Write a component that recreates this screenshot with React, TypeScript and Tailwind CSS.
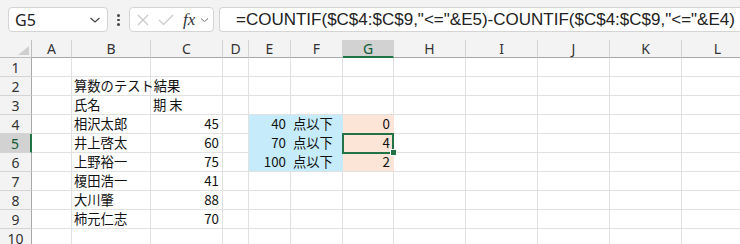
import React from 'react';

const COLS = ['A', 'B', 'C', 'D', 'E', 'F', 'G', 'H', 'I', 'J', 'K', 'L'];

type Cell = { text?: string; align?: 'left' | 'right'; fill?: 'blue' | 'peach' };

// row number -> column letter -> cell
const sheet: Record<number, Record<string, Cell>> = {
  2: { B: { text: '算数のテスト結果' } },
  3: { B: { text: '氏名' }, C: { text: '期 末' } },
  4: {
    B: { text: '相沢太郎' },
    C: { text: '45', align: 'right' },
    E: { text: '40', align: 'right', fill: 'blue' },
    F: { text: '点以下', fill: 'blue' },
    G: { text: '0', align: 'right', fill: 'peach' },
  },
  5: {
    B: { text: '井上啓太' },
    C: { text: '60', align: 'right' },
    E: { text: '70', align: 'right', fill: 'blue' },
    F: { text: '点以下', fill: 'blue' },
    G: { text: '4', align: 'right', fill: 'peach' },
  },
  6: {
    B: { text: '上野裕一' },
    C: { text: '75', align: 'right' },
    E: { text: '100', align: 'right', fill: 'blue' },
    F: { text: '点以下', fill: 'blue' },
    G: { text: '2', align: 'right', fill: 'peach' },
  },
  7: { B: { text: '榎田浩一' }, C: { text: '41', align: 'right' } },
  8: { B: { text: '大川肇' }, C: { text: '88', align: 'right' } },
  9: { B: { text: '柿元仁志' }, C: { text: '70', align: 'right' } },
};

const cellFont = { fontFamily: '"Noto Sans CJK JP", "Noto Sans", sans-serif' };
const uiFont = { fontFamily: '"Noto Sans", "Liberation Sans", sans-serif' };

const FormulaBar: React.FC = () => (
  <div className="flex h-[40px] items-start bg-[#f3f3f3] pt-[7px]" style={uiFont}>
    <div className="ml-[8px] flex h-[25px] w-[100px] items-center justify-between rounded-[4px] border border-[#d4d4d4] bg-white pl-[6px] pr-[6px]">
      <span className="text-[16px] leading-none text-[#222]">G5</span>
      <svg width="12" height="8" viewBox="0 0 12 8">
        <path d="M1.5 2 L6 6 L10.5 2" fill="none" stroke="#444" strokeWidth="1.2" />
      </svg>
    </div>
    <div className="flex w-[21px] flex-col items-center gap-[2px] pt-[7px]">
      <span className="h-[2.5px] w-[2.5px] rounded-full bg-[#444]" />
      <span className="h-[2.5px] w-[2.5px] rounded-full bg-[#444]" />
      <span className="h-[2.5px] w-[2.5px] rounded-full bg-[#444]" />
    </div>
    <div className="flex h-[25px] w-[85px] items-center rounded-[4px] border border-[#d4d4d4] bg-white pl-[7px]">
      <svg width="12" height="12" viewBox="0 0 12 12">
        <path d="M1 1 L11 11 M11 1 L1 11" stroke="#c8c8c8" strokeWidth="1.2" />
      </svg>
      <svg width="16" height="12" viewBox="0 0 16 12" className="ml-[9px]">
        <path d="M1 6 L5.5 10.5 L15 1" fill="none" stroke="#c8c8c8" strokeWidth="1.2" />
      </svg>
      <span
        className="ml-[9px] text-[17px] italic leading-none text-[#333]"
        style={{ fontFamily: '"Liberation Serif", serif' }}
      >
        fx
      </span>
      <svg width="9" height="6" viewBox="0 0 9 6" className="ml-[5px]">
        <path d="M1 1.5 L4.5 4.5 L8 1.5" fill="none" stroke="#777" strokeWidth="1" />
      </svg>
    </div>
    <div className="ml-[5px] flex h-[25px] flex-1 items-center rounded-l-[4px] border border-r-0 border-[#d4d4d4] bg-white pl-[16px]">
      <span className="whitespace-nowrap text-[17px] leading-none text-[#222]" style={{ fontFamily: '"Liberation Sans", sans-serif' }}>
        =COUNTIF($C$4:$C$9,"&lt;="&amp;E5)-COUNTIF($C$4:$C$9,"&lt;="&amp;E4)
      </span>
    </div>
  </div>
);

const App: React.FC = () => {
  const rows = [1, 2, 3, 4, 5, 6, 7, 8, 9, 10];
  return (
    <div className="h-[244px] w-[740px] overflow-hidden bg-white">
      <FormulaBar />
      <div
        className="grid w-[754px] grid-cols-[32px_40px_79px_72px_26px_42px_52px_51px_72px_72px_72px_72px_72px] grid-rows-[18px_repeat(10,19px)]"
      >
        {/* corner */}
        <div className="relative border-b border-r border-[#bdbdbd] bg-[#f3f3f3]">
          <svg width="11" height="9" viewBox="0 0 11 9" className="absolute bottom-[2px] right-[2px]">
            <path d="M11 0 L11 9 L0 9 Z" fill="#cfcfcf" />
          </svg>
        </div>
        {COLS.map((c) => (
          <div
            key={c}
            className={`flex items-center justify-center border-r text-[14px] ${
              c === 'G'
                ? 'border-b-2 border-r-[#d4d4d4] border-b-[#217346] bg-[#d2d2d2] text-[#0f5a34]'
                : 'border-b border-[#d4d4d4] border-b-[#a8a8a8] bg-[#f3f3f3] text-[#333]'
            }`}
            style={uiFont}
          >
            {c}
          </div>
        ))}
        {rows.map((r) => (
          <React.Fragment key={r}>
            <div
              className={`flex items-center justify-center border-b border-[#d4d4d4] text-[14px] ${
                r === 5
                  ? 'border-r-2 border-r-[#217346] bg-[#d2d2d2] text-[#0f5a34]'
                  : 'border-r border-r-[#a8a8a8] bg-[#f3f3f3] text-[#333]'
              }`}
              style={uiFont}
            >
              {r}
            </div>
            {COLS.map((c) => {
              const cell = sheet[r]?.[c];
              const fill =
                cell?.fill === 'blue'
                  ? 'bg-[#c6ebfb] border-[#c6ebfb]'
                  : cell?.fill === 'peach'
                    ? 'bg-[#fce4d6] border-[#fce4d6]'
                    : 'border-[#e1e1e1]';
              const blueBottom = cell?.fill && r === 6 ? 'border-b-[#e1e1e1]' : '';
              const right = cell?.align === 'right';
              const isSel = r === 5 && c === 'G';
              return (
                <div
                  key={c}
                  className={`relative flex items-center whitespace-nowrap border-b border-r text-[13.3px] leading-none text-[#111] ${fill} ${blueBottom} ${
                    right ? (c === 'E' ? 'justify-end pr-[4px]' : 'justify-end pr-[3px]') : 'pl-[2px]'
                  }`}
                  style={cellFont}
                >
                  {cell?.text}
                  {isSel && (
                    <>
                      <div className="absolute -left-[1px] -top-[1px] z-10 h-[21px] w-[52px] border-2 border-[#217346]" />
                      <div className="absolute -bottom-[4px] -right-[4px] z-20 h-[7px] w-[7px] border border-white bg-[#217346]" />
                    </>
                  )}
                </div>
              );
            })}
          </React.Fragment>
        ))}
      </div>
    </div>
  );
};

export default App;
